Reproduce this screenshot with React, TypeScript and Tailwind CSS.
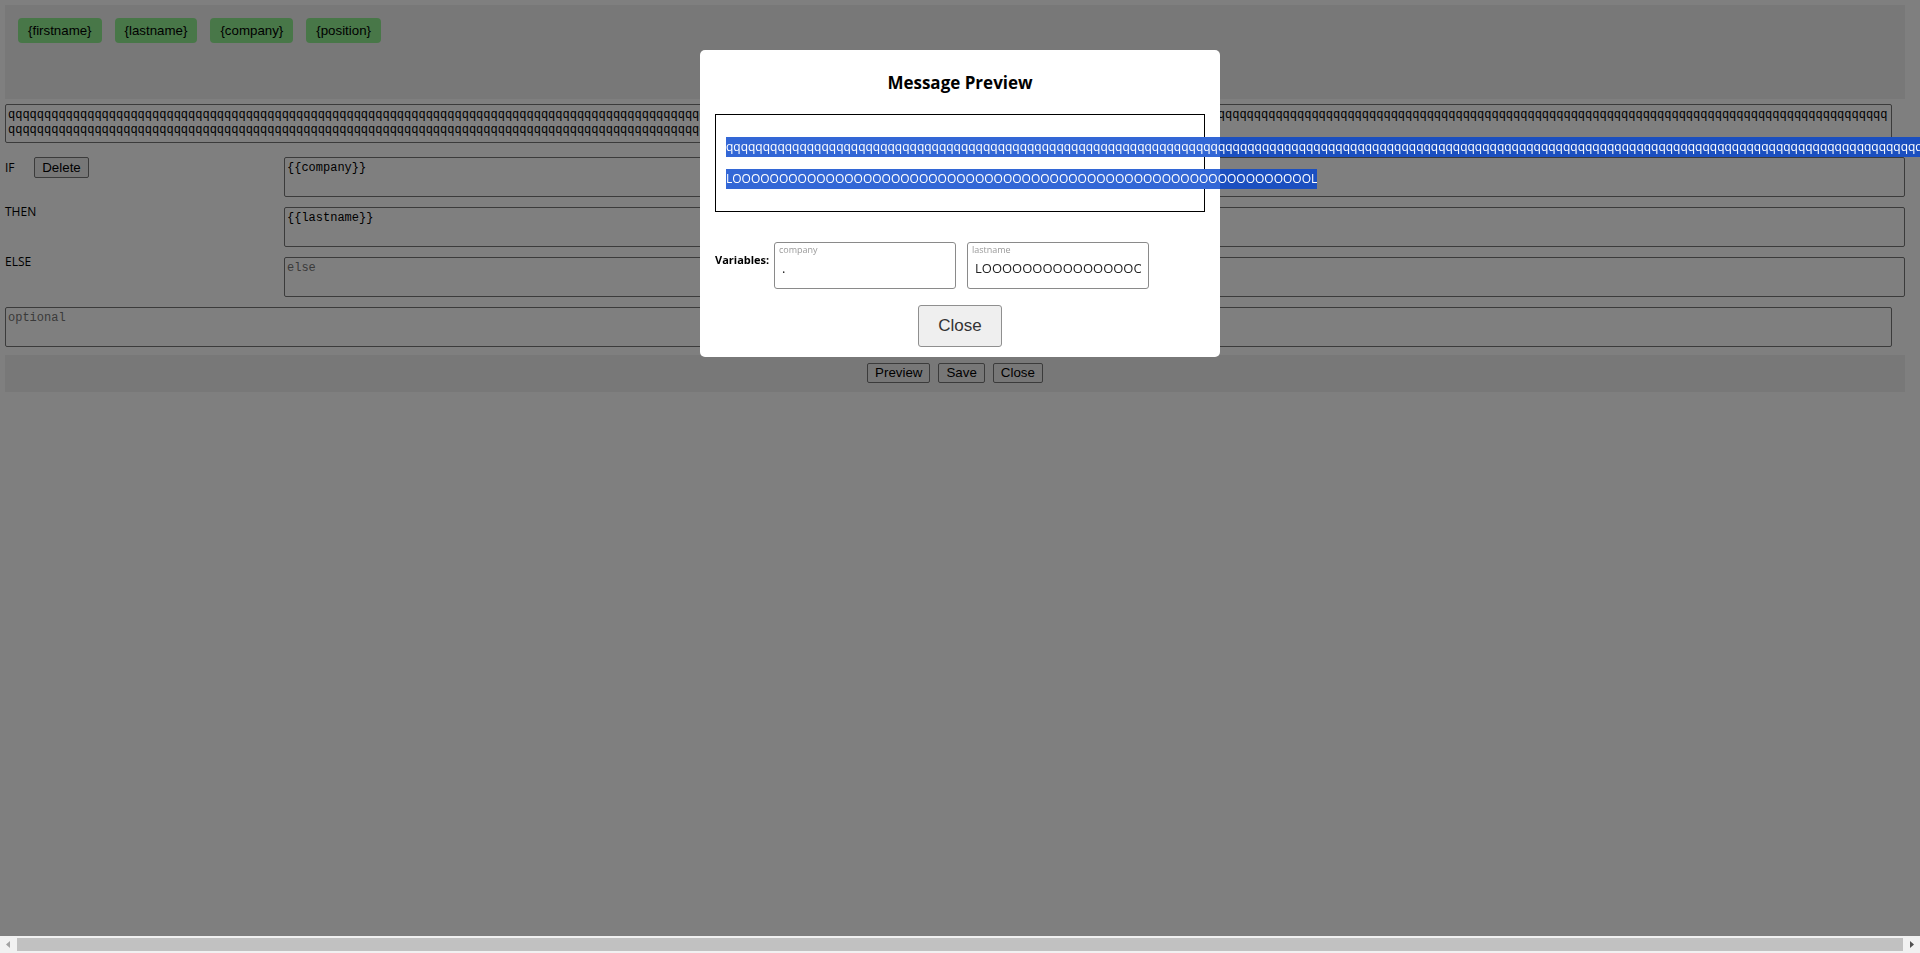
import React from "react";

const TAGS = ["{firstname}", "{lastname}", "{company}", "{position}"];

const TOP_TEXT = "q".repeat(398);
const PREVIEW_Q = "q".repeat(180);
const PREVIEW_L = "L" + "O".repeat(62) + "L";
const LASTNAME = "L" + "O".repeat(62) + "L";

const textareaCls =
  "block resize-none border border-[#767676] rounded-[2px] bg-white px-[2px] pt-[3px] font-['Consolas','Liberation_Mono',monospace] text-[12px] leading-[15px] text-black placeholder:text-[#757575] outline-none";

const nativeBtn =
  "border border-[#767676] rounded-[2px] bg-[#efefef] px-[7px] font-['Arial','Liberation_Sans',sans-serif] text-[13.333px] leading-[18px] text-black";

/**
 * Переменная в окне предпросмотра: подпись сверху, значение снизу
 */
const VarField: React.FC<{ label: string; value: string }> = ({ label, value }) => (
  <div className="flex h-[47px] w-[182px] flex-col rounded-[3px] border border-[#8a8a8a]">
    <span className="pl-[4px] pt-[1px] text-[9px] leading-[11px] text-[#9a9a9a]">{label}</span>
    <input
      readOnly
      value={value}
      className="mt-[2px] h-[22px] w-full px-[7px] text-[13px] text-[#222] outline-none"
    />
  </div>
);

/**
 * Горизонтальная полоса прокрутки внизу окна
 */
const HScrollbar = () => (
  <div className="fixed inset-x-0 bottom-0 z-30 flex h-[17px] items-center bg-[#f1f1f1]">
    <div className="flex w-[17px] justify-center">
      <svg width="5" height="7" viewBox="0 0 5 7">
        <polygon points="4,0 4,7 0,3.5" fill="#a3a3a3" />
      </svg>
    </div>
    <div className="h-[13px] flex-1 bg-[#c1c1c1]" />
    <div className="flex w-[17px] justify-center">
      <svg width="5" height="7" viewBox="0 0 5 7">
        <polygon points="1,0 1,7 5,3.5" fill="#505050" />
      </svg>
    </div>
  </div>
);

export default function App() {
  return (
    <div className="relative min-h-screen w-full bg-white font-['Segoe_UI','Open_Sans',sans-serif] text-black">
      <div className="w-[1905px] pl-[5px] pt-[5px]">
        {/* панель с тегами */}
        <div className="flex h-[94px] items-start gap-[13px] bg-[#f0f0f0] pl-[13px] pt-[13px]">
          {TAGS.map((t) => (
            <span
              key={t}
              className="flex h-[25px] items-center rounded-[4px] bg-[#90ee90] px-[10px] font-['Arial','Liberation_Sans',sans-serif] text-[13.3px] text-black"
            >
              {t}
            </span>
          ))}
        </div>

        <textarea readOnly value={TOP_TEXT} className={`${textareaCls} mt-[5px] h-[39px] w-[1887px]`} />

        <div className="mt-[14px] grid grid-cols-[279px_1fr] gap-y-[10px]">
          <div className="flex h-[21px] items-center">
            <span className="w-[29px] text-[12px]">IF</span>
            <button className={`${nativeBtn} h-[21px] w-[55px]`}>Delete</button>
          </div>
          <textarea readOnly value="{{company}}" className={`${textareaCls} h-[40px] w-full`} />

          <span className="-mt-[3px] text-[12px] leading-[16px]">THEN</span>
          <textarea readOnly value="{{lastname}}" className={`${textareaCls} h-[40px] w-full`} />

          <span className="-mt-[3px] text-[12px] leading-[16px]">ELSE</span>
          <textarea readOnly placeholder="else" className={`${textareaCls} h-[40px] w-full`} />
        </div>

        <textarea readOnly placeholder="optional" className={`${textareaCls} mt-[10px] h-[40px] w-[1887px]`} />

        <div className="mt-[8px] flex h-[37px] justify-center gap-[8px] bg-[#f0f0f0] pt-[8px]">
          <button className={`${nativeBtn} h-[20px]`}>Preview</button>
          <button className={`${nativeBtn} h-[20px]`}>Save</button>
          <button className={`${nativeBtn} h-[20px]`}>Close</button>
        </div>
      </div>

      {/* затемнение */}
      <div className="fixed inset-x-0 top-0 bottom-[17px] z-10 bg-black/50" />

      {/* окно предпросмотра */}
      <div className="absolute inset-x-0 top-[50px] z-20 flex justify-center">
        <div className="w-[520px] rounded-[5px] bg-white px-[15px] pb-[10px] pt-[21px]">
          <h2 className="text-center text-[17px] font-bold leading-[24px]">Message Preview</h2>

          <div className="mt-[19px] flex h-[98px] flex-col items-start gap-[12px] border border-black px-[10px] py-[22px]">
            <span className="inline-block w-[1201px] overflow-hidden whitespace-nowrap bg-[linear-gradient(to_right,#3367d6_494px,#1b4fc0_494px)] text-[12px] leading-[20px] text-white">
              {PREVIEW_Q}
            </span>
            <span className="inline-block whitespace-nowrap bg-[linear-gradient(to_right,#3367d6_494px,#1b4fc0_494px)] text-[12px] leading-[20px] text-white">
              {PREVIEW_L}
            </span>
          </div>

          <div className="mt-[30px] flex items-start gap-[11px]">
            <span className="-mr-[13px] mt-[10px] w-[61px] text-[11px] font-bold leading-[16px]">Variables:</span>
            <VarField label="company" value="." />
            <VarField label="lastname" value={LASTNAME} />
          </div>

          <button className="mx-auto mt-[16px] block h-[42px] w-[84px] rounded-[3px] border border-[#8f8f8f] bg-[#efefef] font-['Arial','Liberation_Sans',sans-serif] text-[17px] text-[#333]">
            Close
          </button>
        </div>
      </div>

      <HScrollbar />
    </div>
  );
}
